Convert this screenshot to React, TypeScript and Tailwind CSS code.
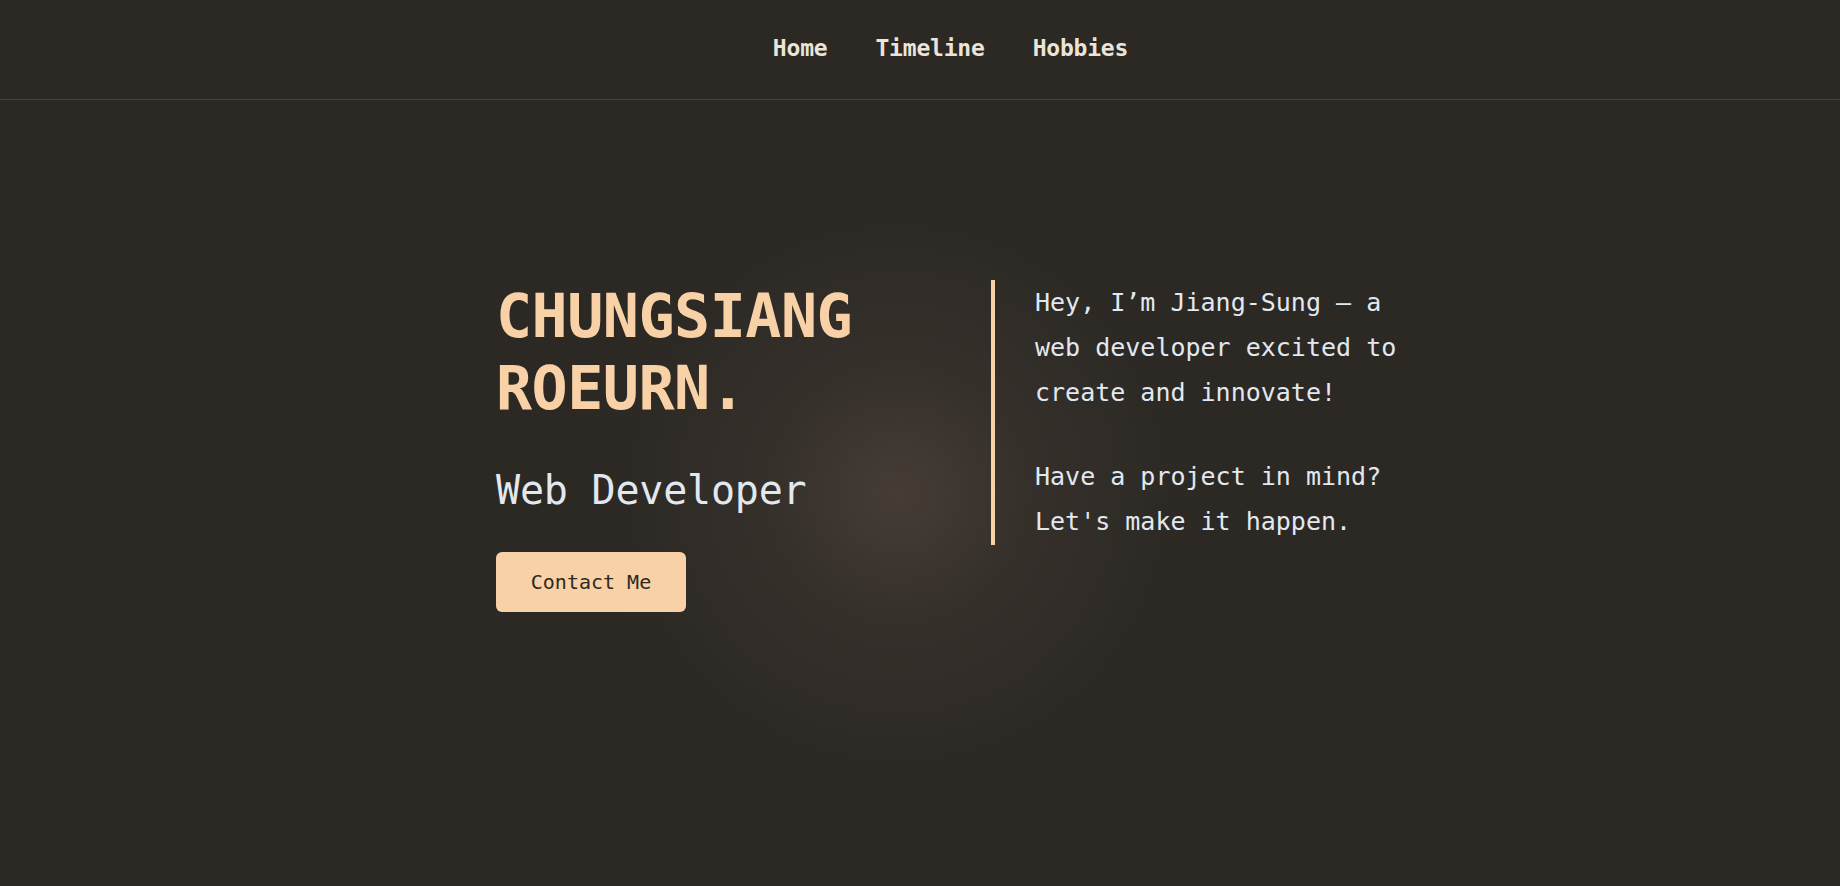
import React from "react";

export default function App() {
  return (
    <div className="min-h-screen bg-[#2c2924] font-['DejaVu_Sans_Mono','Liberation_Mono',monospace]">
      <header className="h-[100px] border-b border-[#46413c] flex items-center justify-center pl-[61px]">
        <nav className="flex gap-[48px] text-[23px] font-bold text-[#ebe5d9] pb-[2px] tracking-[-0.2px]">
          <a href="#">Home</a>
          <a href="#">Timeline</a>
          <a href="#">Hobbies</a>
        </nav>
      </header>
      <main className="relative h-[786px] overflow-hidden">
        <div className="pointer-events-none absolute left-[578px] top-[73px] w-[640px] h-[640px] rounded-full bg-[radial-gradient(circle,rgba(80,68,61,0.7)_0%,rgba(66,57,51,0.4)_30%,rgba(50,45,40,0.12)_60%,rgba(44,41,36,0)_72%)]" />
        <div className="relative flex pt-[180px] pl-[496px]">
          <div className="w-[495px] flex flex-col items-start">
            <h1 className="text-[60px] leading-[72px] font-bold text-[#f8d1a6] tracking-[-0.5px]">
              CHUNGSIANG
              <br />
              ROEURN.
            </h1>
            <h2 className="mt-[42px] text-[40px] leading-[48px] text-[#e2e8f0] tracking-[-0.2px]">
              Web Developer
            </h2>
            <button className="mt-[38px] w-[190px] h-[60px] rounded-[6px] bg-[#f8d1a6] text-[20px] text-[#2c2924]">
              Contact Me
            </button>
          </div>
          <div className="border-l-[4px] border-[#f8d1a6] pl-[40px] w-[470px] h-[265px] text-[25px] leading-[45px] text-[#e2e8f0]">
            <p className="w-[390px]">Hey, I’m Jiang-Sung — a web developer excited to create and innovate!</p>
            <p className="w-[390px] mt-[39px]">Have a project in mind? Let's make it happen.</p>
          </div>
        </div>
      </main>
    </div>
  );
}
